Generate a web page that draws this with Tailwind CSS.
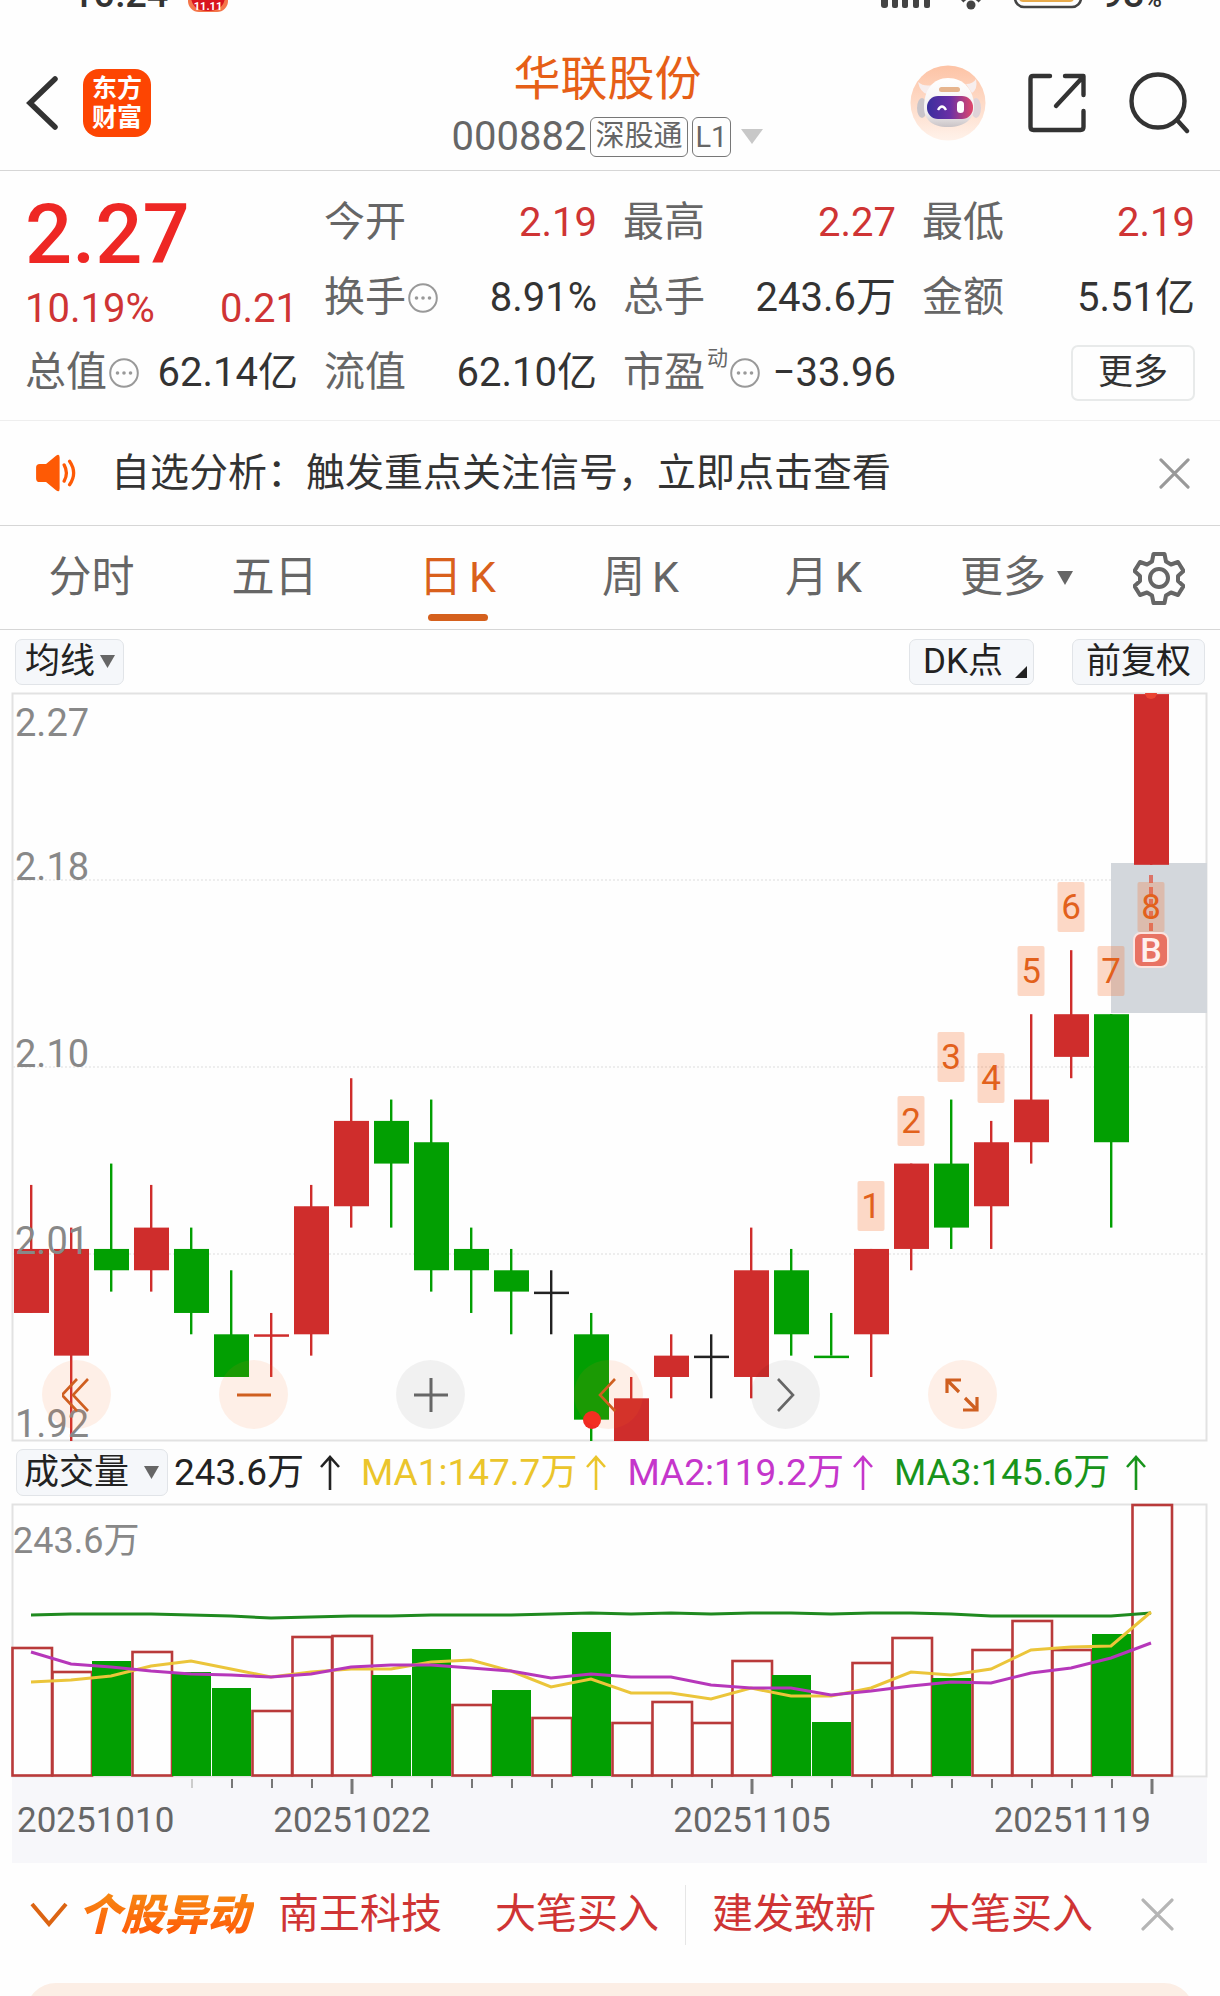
<!DOCTYPE html>
<html lang="zh-CN">
<head>
    <meta charset="UTF-8">
    <meta name="viewport" content="width=device-width, initial-scale=1.0">
    <title>华联股份 000882</title>
    <script src="https://cdn.jsdelivr.net/npm/@tailwindcss/browser@4"></script>
    <style>
        body {
            font-family: Roboto, 'Noto Sans CJK SC', sans-serif;
        }
    </style>
</head>
<body class="bg-[#fefefe] text-[#333] overflow-x-hidden">
    <!-- Shared icons -->
    <svg class="hidden">
        <symbol id="info" viewBox="0 0 30 30">
            <circle cx="15" cy="15" r="13.8" fill="none" stroke="#999" stroke-width="2" />
            <circle cx="8.5" cy="15" r="1.8" fill="#999" /><circle cx="15" cy="15" r="1.8" fill="#999" /><circle cx="21.5" cy="15" r="1.8" fill="#999" />
        </symbol>
        <symbol id="close" viewBox="0 0 32 32">
            <path d="M2 2 30 30M30 2 2 30" fill="none" stroke="currentColor" stroke-width="3.2" stroke-linecap="round" />
        </symbol>
        <symbol id="up" viewBox="0 0 20 36">
            <path d="M10 35V2M1 12 10 2l9 10" fill="none" stroke="currentColor" stroke-width="2.6" />
        </symbol>
    </svg>

    <!-- Status bar -->
    <div class="h-[13px] overflow-hidden flex items-end justify-between pl-[72px] pr-[58px]">
        <div class="flex items-end gap-5">
            <span class="text-[38px] leading-none font-medium">10:24</span>
            <svg class="w-[40px] h-[40px]" viewBox="0 0 40 40">
                <rect x="0" y="0" width="40" height="39" rx="11" fill="#f4764a" />
                <path d="M3 20h34v5q-2 13-17 13T3 25z" fill="#d9141e" />
                <text x="20" y="37" text-anchor="middle" font-size="11" font-weight="700" fill="#fff">11.11</text>
            </svg>
        </div>
        <div class="flex items-end">
            <svg class="w-[50px] h-[40px] mr-[26px]" viewBox="0 0 50 40" fill="#444">
                <rect x="0" y="24" width="7" height="11" rx="3" /><rect x="11" y="18" width="6" height="17" rx="2" /><rect x="21" y="12" width="6" height="23" rx="2" /><rect x="32" y="6" width="6" height="29" rx="2" /><rect x="43" y="0" width="6" height="35" rx="2" />
            </svg>
            <svg class="w-[30px] h-[40px] mr-[26px]" viewBox="0 0 30 40">
                <circle cx="14" cy="32" r="4.5" fill="#444" />
                <path d="M5 28q9-9 18 0" fill="none" stroke="#444" stroke-width="4" />
            </svg>
            <svg class="w-[70px] h-[40px] mr-[18px]" viewBox="0 0 70 40">
                <rect x="2" y="2" width="66" height="32" rx="9" fill="none" stroke="#444" stroke-width="2.6" />
                <rect x="6" y="6" width="55" height="23" rx="4" fill="#e8ab4c" />
            </svg>
            <span class="text-[38px] leading-none font-medium">98<span class="text-[24px]">%</span></span>
        </div>
    </div>

    <!-- Header -->
    <header class="h-[158px] border-b border-[#d6d6d6] flex items-center justify-between pl-[25px] pr-[30px]">
        <div class="flex-1 flex items-center gap-[24px] pt-[22px]">
            <button aria-label="返回">
                <svg class="w-[34px] h-[56px]" viewBox="0 0 34 56"><path d="M30 4 5 28l25 24" fill="none" stroke="#333" stroke-width="5.5" stroke-linecap="round" /></svg>
            </button>
            <div class="w-[68px] h-[68px] rounded-2xl bg-[#fd4502] text-white text-[25px] leading-[29px] font-bold flex flex-col items-center justify-center">
                <span>东方</span><span>财富</span>
            </div>
        </div>
        <div class="flex flex-col items-center pt-[26px]">
            <h1 class="text-[47px] leading-[64px] text-[#e65f17]">华联股份</h1>
            <div class="flex items-center gap-[4px] h-[52px] text-[#666]">
                <span class="text-[40px]">000882</span>
                <span class="h-[40px] px-[4px] rounded-[6px] border border-[#777] text-[29px] leading-[37px]">深股通</span>
                <span class="h-[40px] px-[3px] rounded-[6px] border border-[#777] text-[29px] leading-[38px]">L1</span>
                <svg class="w-[22px] h-[15px] ml-[6px]" viewBox="0 0 22 15"><path d="M0 0h22L11 15z" fill="#c8c8c8" /></svg>
            </div>
        </div>
        <div class="flex-1 flex items-center justify-end gap-[42px] pt-[22px]">
            <button aria-label="助手">
                <svg class="w-[76px] h-[76px]" viewBox="0 0 76 76">
                    <defs>
                        <linearGradient id="halo" x1="0" y1="0" x2="0" y2="1"><stop offset="0" stop-color="#fdc3a5" /><stop offset="1" stop-color="#fff2ea" /></linearGradient>
                        <linearGradient id="visor"><stop offset="0" stop-color="#3a2f9e" /><stop offset=".5" stop-color="#6a2fa5" /><stop offset="1" stop-color="#e0486a" /></linearGradient>
                        <linearGradient id="shell" x1="0" y1="0" x2="0" y2="1"><stop offset="0" stop-color="#fff" /><stop offset=".7" stop-color="#f3f0f0" /><stop offset="1" stop-color="#c9c3c6" /></linearGradient>
                    </defs>
                    <circle cx="38" cy="38" r="37.5" fill="url(#halo)" />
                    <path d="M8 17q2 10 9 12l5-9q-8 2-14-3zM66 14q2 10-4 14l-6-9q7 0 10-5z" fill="#f7eeee" />
                    <ellipse cx="12" cy="43" rx="5" ry="10" fill="#c9c4c9" /><ellipse cx="66" cy="43" rx="5" ry="10" fill="#ded3d8" />
                    <path d="M38 13c-15 0-24 12-24 29 0 12 7 20 24 20s26-8 26-20C64 25 54 13 38 13z" fill="url(#shell)" />
                    <rect x="29" y="22" width="21" height="5" rx="2.5" fill="#e6b48d" />
                    <rect x="17" y="31" width="46" height="23" rx="11" fill="url(#visor)" />
                    <path d="M28 45q4-7 8 0" fill="none" stroke="#fff" stroke-width="2.4" />
                    <rect x="47" y="36" width="7" height="12" rx="3.5" fill="#fff" />
                </svg>
            </button>
            <button aria-label="分享">
                <svg class="w-[58px] h-[60px]" viewBox="0 0 58 60" fill="none" stroke="#333" stroke-width="4.4" stroke-linecap="round" stroke-linejoin="round">
                    <path d="M22 3H5Q2.500 3 2.500 6v48q0 3 3 3h47q3 0 3-3V38M37 3h18.500v19M54 5 28 33" />
                </svg>
            </button>
            <button aria-label="搜索">
                <svg class="w-[62px] h-[62px]" viewBox="0 0 62 62" fill="none" stroke="#333" stroke-width="4.4" stroke-linecap="round">
                    <circle cx="30" cy="29" r="26.500" /><path d="M49 48 59 59" />
                </svg>
            </button>
        </div>
    </header>

    <!-- Quote -->
    <section class="flex gap-[26px] px-[25px] pt-[14px] pb-[10px] border-b border-[#eee] text-[41px] leading-none text-[#333]">
        <div class="flex-1">
            <div class="h-[98px] flex items-center text-[83px] font-medium text-[#ee2724]">2.27</div>
            <div class="h-[52px] flex items-center justify-between text-[#cf3434] text-[40px]"><span>10.19%</span><span>0.21</span></div>
            <div class="h-[75px] flex items-center justify-between whitespace-nowrap">
                <span class="flex items-center gap-[2px] text-[#666]">总值<svg class="w-[30px] h-[30px]"><use href="#info" /></svg></span><span class="text-[40px]">62.14亿</span>
            </div>
        </div>
        <div class="flex-1">
            <div class="h-[75px] flex items-center justify-between"><span class="text-[#666]">今开</span><span class="text-[40px] text-[#cf3434]">2.19</span></div>
            <div class="h-[75px] flex items-center justify-between">
                <span class="flex items-center gap-[2px] text-[#666]">换手<svg class="w-[30px] h-[30px]"><use href="#info" /></svg></span><span class="text-[40px]">8.91%</span>
            </div>
            <div class="h-[75px] flex items-center justify-between"><span class="text-[#666]">流值</span><span class="text-[40px]">62.10亿</span></div>
        </div>
        <div class="flex-1">
            <div class="h-[75px] flex items-center justify-between"><span class="text-[#666]">最高</span><span class="text-[40px] text-[#cf3434]">2.27</span></div>
            <div class="h-[75px] flex items-center justify-between"><span class="text-[#666]">总手</span><span class="text-[40px]">243.6万</span></div>
            <div class="h-[75px] flex items-center justify-between whitespace-nowrap">
                <span class="flex items-center gap-[2px] text-[#666]">市盈<span class="text-[21px] self-start -mt-1">动</span><svg class="w-[30px] h-[30px]"><use href="#info" /></svg></span><span class="text-[40px]">−33.96</span>
            </div>
        </div>
        <div class="flex-1">
            <div class="h-[75px] flex items-center justify-between"><span class="text-[#666]">最低</span><span class="text-[40px] text-[#cf3434]">2.19</span></div>
            <div class="h-[75px] flex items-center justify-between"><span class="text-[#666]">金额</span><span class="text-[40px]">5.51亿</span></div>
            <div class="h-[75px] flex items-center justify-end"><button class="w-[124px] h-[56px] rounded-[7px] border-2 border-[#e8eaea] text-[35px] leading-none">更多</button></div>
        </div>
    </section>

    <!-- Notice -->
    <section class="h-[105px] flex items-center border-b border-[#d6d6d6] pl-[33px] pr-[30px]">
        <svg class="w-[46px] h-[38px] mr-[32px]" viewBox="0 0 46 42">
            <path d="M1 15q0-4 4-4h7L23 2q4-3 4 2v34q0 5-4 2l-11-9H5q-4 0-4-4z" fill="#fe5a05" />
            <path d="M32 12q5 9 0 18M38 8q9 13 0 26" fill="none" stroke="#fe5a05" stroke-width="3.6" stroke-linecap="round" />
        </svg>
        <p class="flex-1 text-[39px] leading-none whitespace-nowrap">自选分析：触发重点关注信号，立即点击查看</p>
        <button aria-label="关闭" class="text-[#999]"><svg class="w-[31px] h-[31px]"><use href="#close" /></svg></button>
    </section>

    <!-- Period tabs -->
    <nav class="h-[104px] flex border-b border-[#d6d6d6] pr-[20px] text-[43px] leading-none text-[#666]">
        <button class="flex-[183]">分时</button>
        <button class="flex-[183]">五日</button>
        <button class="flex-[183] relative flex items-center justify-center gap-[7px] text-[#d9601c]">日<span>K</span><span class="absolute bottom-[8px] left-1/2 -translate-x-1/2 w-[60px] h-[7px] rounded-full bg-[#d5601d]"></span></button>
        <button class="flex-[183] flex items-center justify-center gap-[7px]">周<span>K</span></button>
        <button class="flex-[183] flex items-center justify-center gap-[7px]">月<span>K</span></button>
        <button class="flex-[203] flex items-center justify-center gap-[11px]">更多<svg class="w-[16px] h-[14px]" viewBox="0 0 16 14"><path d="M0 0h16L8 14z" fill="#666" /></svg></button>
        <button class="flex-[82] flex items-center justify-center" aria-label="设置">
            <svg class="w-[52px] h-[54px]" viewBox="0 0 52 54" fill="none" stroke="#666" stroke-width="4" stroke-linejoin="round">
                <path d="M20.500 3h11l1.500 7.500 5 3 7-2.500 5.500 9-5.500 5v5l5.500 5-5.500 9-7-2.500-5 3-1.500 7.500h-11L19 44.500l-5-3L7 44l-5.500-9L7 30v-5l-5.500-5L7 11l7 2.500 5-3z" /><circle cx="26" cy="27" r="9" />
            </svg>
        </button>
    </nav>

    <!-- Price chart -->
    <section class="px-[12px]">
        <div class="h-[63px] flex items-center px-[3px] text-[35px] leading-none text-[#222]">
            <button class="h-[46px] pl-[9px] pr-[8px] rounded-[7px] border border-[#e1e4e8] bg-[#f5f7fa] flex items-center gap-[5px]">均线<svg class="w-[15px] h-[13px]" viewBox="0 0 15 13"><path d="M0 0h15L7.500 13z" fill="#666" /></svg></button>
            <button class="h-[46px] pl-[13px] pr-[6px] ml-auto mr-[38px] rounded-[7px] border border-[#e1e4e8] bg-[#f5f7fa] flex items-center gap-[12px]">DK点<svg class="w-[12px] h-[12px] self-end mb-[6px]" viewBox="0 0 12 12"><path d="M12 0v12H0z" fill="#222" /></svg></button>
            <button class="h-[46px] px-[13px] rounded-[7px] border border-[#e1e4e8] bg-[#f5f7fa]">前复权</button>
        </div>
        <div class="relative">
            <svg id="price" class="block w-full overflow-visible" viewBox="12 693 1196 748"></svg>
            <div class="absolute left-[30px] right-[211px] bottom-[12px] flex justify-between">
                <button aria-label="最左" class="w-[69px] h-[69px] rounded-full bg-[#ff6a1a]/10 flex items-center justify-center">
                    <svg class="w-[30px] h-[34px]" viewBox="0 0 30 34" fill="none" stroke="#cf5f20" stroke-width="2.600"><path d="M15 1 0 17l15 16M26 1 11 17l15 16" /></svg>
                </button>
                <button aria-label="缩小" class="w-[69px] h-[69px] rounded-full bg-[#ff6a1a]/10 flex items-center justify-center">
                    <svg class="w-[34px] h-[34px]" viewBox="0 0 34 34" fill="none" stroke="#cf5f20" stroke-width="3"><path d="M0 17h34" /></svg>
                </button>
                <button aria-label="放大" class="w-[69px] h-[69px] rounded-full bg-black/5 flex items-center justify-center">
                    <svg class="w-[34px] h-[34px]" viewBox="0 0 34 34" fill="none" stroke="#666" stroke-width="3"><path d="M0 17h34M17 0v34" /></svg>
                </button>
                <button aria-label="左移" class="w-[69px] h-[69px] rounded-full bg-[#ff6a1a]/10 flex items-center justify-center">
                    <svg class="w-[20px] h-[34px]" viewBox="0 0 20 34" fill="none" stroke="#cf5f20" stroke-width="2.600"><path d="M17 1 2 17l15 16" /></svg>
                </button>
                <button aria-label="右移" class="w-[69px] h-[69px] rounded-full bg-black/5 flex items-center justify-center">
                    <svg class="w-[20px] h-[34px]" viewBox="0 0 20 34" fill="none" stroke="#666" stroke-width="2.600"><path d="M3 1 18 17 3 33" /></svg>
                </button>
                <button aria-label="全屏" class="w-[69px] h-[69px] rounded-full bg-[#ff6a1a]/10 flex items-center justify-center">
                    <svg class="w-[34px] h-[34px]" viewBox="0 0 34 34" fill="none" stroke="#cf5f20" stroke-width="3.200"><path d="M2 15V2h14M2.500 2.500 14 14M32 19v13H18M31.500 31.500 20 20" /></svg>
                </button>
            </div>
        </div>
    </section>

    <!-- Volume chart -->
    <section class="px-[12px]">
        <div class="h-[63px] flex items-center pl-1 text-[37px] leading-none text-[#222] whitespace-nowrap">
            <button class="h-[47px] pl-[7px] pr-[8px] mr-[6px] rounded-[7px] border border-[#e1e4e8] bg-[#f5f7fa] flex items-center gap-[15px] text-[35px] leading-none">成交量<svg class="w-[15px] h-[13px]" viewBox="0 0 15 13"><path d="M0 0h15L7.500 13z" fill="#666" /></svg></button>
            <span class="flex items-center gap-[16px] mr-[21px]">243.6万<svg class="w-[20px] h-[36px]"><use href="#up" /></svg></span>
            <span class="flex items-center gap-[9px] mr-[21px] text-[#ebc52b]">MA1:147.7万<svg class="w-[20px] h-[36px]"><use href="#up" /></svg></span>
            <span class="flex items-center gap-[9px] mr-[21px] text-[#c536cb]">MA2:119.2万<svg class="w-[20px] h-[36px]"><use href="#up" /></svg></span>
            <span class="flex items-center gap-[16px] text-[#18941b]">MA3:145.6万<svg class="w-[20px] h-[36px]"><use href="#up" /></svg></span>
        </div>
        <svg id="volume" class="block w-full overflow-visible" viewBox="12 1504 1196 359"></svg>
    </section>

    <!-- Movers ticker -->
    <section class="h-[101px] flex items-center pt-[2px] pl-[30px] pr-[46px] text-[41px] leading-none text-[#cf3434] whitespace-nowrap">
        <button aria-label="展开" class="mr-[10px]"><svg class="w-[38px] h-[25px]" viewBox="0 0 38 25"><path d="M2 2 19 22 36 2" fill="none" stroke="#dc6412" stroke-width="4" /></svg></button>
        <span class="text-[43px] leading-[50px] font-black italic bg-linear-to-b from-[#f58a12] to-[#ff5208] bg-clip-text text-transparent pr-1 mr-[24px]">个股异动</span>
        <a href="#" class="mr-[53px]">南王科技</a>
        <a href="#" class="mr-[26px]">大笔买入</a>
        <span class="w-px h-[60px] bg-[#e6e6e6] mr-[26px]"></span>
        <a href="#" class="mr-[53px]">建发致新</a>
        <a href="#">大笔买入</a>
        <button aria-label="关闭" class="ml-auto text-[#b5b5b5]"><svg class="w-[33px] h-[33px]"><use href="#close" /></svg></button>
    </section>
    <div class="h-[32px] overflow-hidden pt-[19px] px-[26px]"><div class="h-[60px] rounded-[40px] bg-[#fceee5]"></div></div>

    <script>
        const RED = '#cf2d2c', GREEN = '#029f02', BLACK = '#222';
        const x = i => 31.5 + 40 * i;

        // [colour, body top, body bottom, high, low], in cents above 1.92
        const candles = [
            ['r', 9, 6, 12, 6], ['r', 9, 4, 10, 0], ['g', 9, 8, 13, 7], ['r', 10, 8, 12, 7], ['g', 9, 6, 10, 5],
            ['g', 5, 3, 8, 3], ['r', 5, 5, 6, 3], ['r', 11, 5, 12, 4], ['r', 15, 11, 17, 10], ['g', 15, 13, 16, 10],
            ['g', 14, 8, 16, 7], ['g', 9, 8, 10, 6], ['g', 8, 7, 9, 5], ['k', 7, 7, 8, 5], ['g', 5, 1, 6, 0],
            ['r', 2, 0, 3, 0], ['r', 4, 3, 5, 2], ['k', 4, 4, 5, 2], ['r', 8, 3, 10, 2], ['g', 8, 5, 9, 4],
            ['g', 4, 4, 6, 4], ['r', 9, 5, 9, 3], ['r', 13, 9, 13, 8], ['g', 13, 10, 16, 9], ['r', 14, 11, 15, 9],
            ['r', 16, 14, 20, 13], ['r', 20, 18, 23, 17], ['g', 20, 14, 20, 10], ['r', 35, 27, 35, 27]
        ];
        const colors = { r: RED, g: GREEN, k: BLACK };
        const py = t => 1441 - t * 21.34;

        let s = '<rect x="12.5" y="693.5" width="1194" height="747" fill="none" stroke="#e2e2e2" stroke-width="2"/>';
        [880, 1067, 1254].forEach(y => {
            s += `<path d="M13 ${y}H1206" stroke="#e8e8e8" stroke-width="1.5" stroke-dasharray="2 2"/>`;
        });
        s += '<rect x="1111" y="863" width="96" height="150" fill="#d3d7dc"/>';
        candles.forEach(([c, top, bottom, high, low], i) => {
            const h = Math.max(py(bottom) - py(top), 2.5);
            s += `<rect x="${x(i) - 1.5}" y="${py(high)}" width="2.4" height="${py(low) - py(high)}" fill="${colors[c]}"/>`;
            s += `<rect x="${x(i) - 17.5}" y="${py(top)}" width="35" height="${h}" fill="${colors[c]}"/>`;
        });
        s += '<circle cx="592" cy="1420" r="9" fill="#f02a22"/><path d="M1145 693h12a6 6 0 0 1-12 0z" fill="#ea4433"/>';
        s += '<path d="M1151 875V932" stroke="#dc7468" stroke-width="4" stroke-dasharray="8 4"/>';

        // Nine-turn counters, drawn above each candle's high
        const marks = [1225, 1140, 1076, 1097, 990, 926, 990, 926];
        marks.forEach((y, n) => {
            const cx = x(21 + n) - 0.5;
            s += `<rect x="${cx - 13.5}" y="${y - 44}" width="27" height="50" rx="2" fill="#f96820" fill-opacity=".25"/>`;
            s += `<text x="${cx}" y="${y - 7}" text-anchor="middle" font-size="35" fill="#e2611c">${n + 1}</text>`;
        });
        s += '<rect x="1134" y="933" width="34" height="34" rx="7" fill="#e87263" stroke="#fbe3df" stroke-width="2"/>';
        s += '<text x="1151" y="962" text-anchor="middle" font-size="34" font-weight="500" fill="#fff0ee">B</text>';
        [['2.27', 736], ['2.18', 880], ['2.10', 1067], ['2.01', 1254], ['1.92', 1437]].forEach(([t, y]) => {
            s += `<text x="15" y="${y}" font-size="38" fill="#888">${t}</text>`;
        });
        document.getElementById('price').innerHTML = s;

        // [colour, top edge] of each volume bar
        const vol = [
            ['r', 1648], ['r', 1672], ['g', 1661], ['r', 1652], ['g', 1672], ['g', 1688], ['r', 1711], ['r', 1637], ['r', 1636], ['g', 1675],
            ['g', 1649], ['r', 1705], ['g', 1690], ['r', 1718], ['g', 1632], ['r', 1723], ['r', 1702], ['r', 1723], ['r', 1661], ['g', 1675],
            ['g', 1722], ['r', 1663], ['r', 1638], ['g', 1678], ['r', 1650], ['r', 1621], ['r', 1650], ['g', 1634], ['r', 1505]
        ];
        const ma1 = [1682, 1680, 1676, 1666, 1661, 1669, 1677, 1672, 1669, 1669, 1662, 1660, 1671, 1687, 1679, 1693, 1693, 1699, 1688, 1696, 1696, 1688, 1672, 1675, 1669, 1650, 1647, 1646, 1612];
        const ma2 = [1652, 1664, 1667, 1671, 1674, 1675, 1677, 1674, 1667, 1665, 1665, 1668, 1671, 1678, 1674, 1677, 1677, 1685, 1688, 1688, 1695, 1691, 1686, 1682, 1683, 1673, 1668, 1658, 1643];
        const ma3 = [1615, 1614, 1614, 1614, 1615, 1616, 1618, 1617, 1616, 1616, 1615, 1615, 1615, 1614, 1613, 1614, 1613, 1614, 1613, 1613, 1614, 1613, 1613, 1614, 1616, 1616, 1616, 1616, 1613];

        let v = '<rect x="12.5" y="1504.5" width="1194" height="272" fill="none" stroke="#e2e2e2" stroke-width="2"/>';
        v += '<rect x="12" y="1778" width="1195" height="85" fill="#f7f7fa"/>';
        v += '<text x="13" y="1553" font-size="36" fill="#888">243.6万</text>';
        vol.forEach(([c, top], i) => {
            if (c === 'g') {
                v += `<rect x="${x(i) - 19.5}" y="${top}" width="39" height="${1776 - top}" fill="${GREEN}"/>`;
            } else {
                v += `<rect x="${x(i) - 19}" y="${top}" width="39.5" height="${1775.5 - top}" fill="#fefefe" stroke="#b93a3a" stroke-width="2.6"/>`;
            }
        });
        [[ma3, '#1f8a1f'], [ma1, '#ebc53a'], [ma2, '#b637ba']].forEach(([data, color]) => {
            const pts = data.map((y, i) => `${x(i) - 0.5},${y}`).join(' ');
            v += `<polyline points="${pts}" fill="none" stroke="${color}" stroke-width="3"/>`;
        });
        for (let i = 4; i < 29; i++) {
            const major = i % 10 === 8;
            v += `<path d="M${x(i) + 0.5} 1779v${major ? 15 : 9}" stroke="${i === 4 ? '#ccc' : '#777'}" stroke-width="${major ? 3 : 2}"/>`;
        }
        [['20251010', 17, 'start'], ['20251022', 352, 'middle'], ['20251105', 752, 'middle'], ['20251119', 1151, 'end']].forEach(([t, tx, a]) => {
            v += `<text x="${tx}" y="1832" text-anchor="${a}" font-size="35" fill="#666">${t}</text>`;
        });
        document.getElementById('volume').innerHTML = v;
    </script>
</body>
</html>
